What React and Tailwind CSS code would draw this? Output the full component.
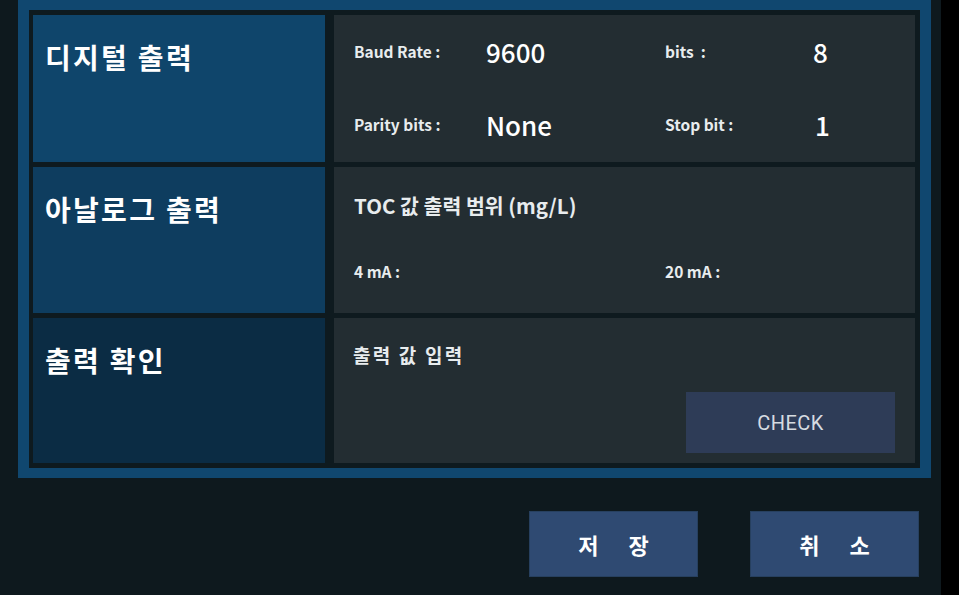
import React from "react";

const ko = { fontFamily: '"Noto Sans CJK KR", "Noto Sans", sans-serif' };

const SectionLabel = ({ children, bg }) => (
    <div className={`${bg} pl-[12px] pt-[24px]`}>
        <div className="text-[28px] leading-[36px] font-bold tracking-[2.3px] text-white">{children}</div>
    </div>
);

const Line = ({ children, className = "" }) => (
    <div className={`h-[36px] flex items-center ${className}`}>{children}</div>
);

export default function App() {
    return (
        <div className="w-[959px] h-[595px] flex bg-black overflow-hidden" style={ko}>
            <div className="w-[941px] h-full bg-[#0e191e] pl-[18px] pr-[10px]">
                {/* frame */}
                <div className="border-x-[11px] border-y-[10px] border-[#10476f] bg-[#0e1a1f] pt-[5px] pb-[5px] pl-[4px] pr-[5px]">
                    <div className="grid grid-cols-[292px_581px] grid-rows-[147px_146px_145px] gap-x-[9px] gap-y-[5px]">
                        {/* digital */}
                        <SectionLabel bg="bg-[#0f456b]">디지털 출력</SectionLabel>
                        <div className="bg-[#232d32] px-[20px] pt-[17px] text-[#e8ecee]">
                            <Line className="grid grid-cols-[132px_179px_148px_auto]">
                                <span className="text-[15.5px] font-bold">Baud Rate :</span>
                                <span className="text-[26px] font-medium text-white">9600</span>
                                <span className="text-[15.5px] font-bold">bits&nbsp; :</span>
                                <span className="text-[26px] font-medium text-white">8</span>
                            </Line>
                            <Line className="grid grid-cols-[132px_179px_148px_auto] mt-[37px]">
                                <span className="text-[15.5px] font-bold">Parity bits :</span>
                                <span className="text-[26px] font-medium text-white">None</span>
                                <span className="text-[15.5px] font-bold">Stop bit :</span>
                                <span className="text-[26px] font-medium text-white pl-[2px]">1</span>
                            </Line>
                        </div>

                        {/* analog */}
                        <SectionLabel bg="bg-[#0e3d5f]">아날로그 출력</SectionLabel>
                        <div className="bg-[#232d32] px-[20px] pt-[20px] text-[#e8ecee]">
                            <Line>
                                <span className="text-[20.5px] font-bold">TOC 값 출력 범위 (mg/L)</span>
                            </Line>
                            <Line className="grid grid-cols-[311px_auto] mt-[31px]">
                                <span className="text-[15.5px] font-bold">4 mA :</span>
                                <span className="text-[15.5px] font-bold">20 mA :</span>
                            </Line>
                        </div>

                        {/* check */}
                        <SectionLabel bg="bg-[#0b2c44]">출력 확인</SectionLabel>
                        <div className="bg-[#232d32] pl-[19px] pr-[20px] pt-[19px] pb-[10px] flex flex-col text-[#e8ecee]">
                            <Line>
                                <span className="text-[19px] font-bold tracking-[2.2px]">출력 값 입력</span>
                            </Line>
                            <div className="flex justify-end mt-[19px]">
                                <button
                                    className="w-[209px] h-[61px] bg-[#2e3c57] text-[#d6dbe1] text-[20px] tracking-[0.5px]"
                                    style={{ fontFamily: 'Roboto, "Liberation Sans", sans-serif' }}
                                >
                                    CHECK
                                </button>
                            </div>
                        </div>
                    </div>
                </div>

                {/* footer buttons */}
                <div className="flex justify-end gap-[52px] pr-[12px] mt-[33px]">
                    <button className="w-[169px] h-[66px] bg-[#2f4a72] border border-[#27405f] flex items-center justify-center gap-[30px] text-white text-[22px] font-bold">
                        <span>저</span>
                        <span>장</span>
                    </button>
                    <button className="w-[169px] h-[66px] bg-[#2f4a72] border border-[#27405f] flex items-center justify-center gap-[30px] text-white text-[22px] font-bold">
                        <span>취</span>
                        <span>소</span>
                    </button>
                </div>
            </div>
            <div className="w-[18px] h-full bg-black" />
        </div>
    );
}
